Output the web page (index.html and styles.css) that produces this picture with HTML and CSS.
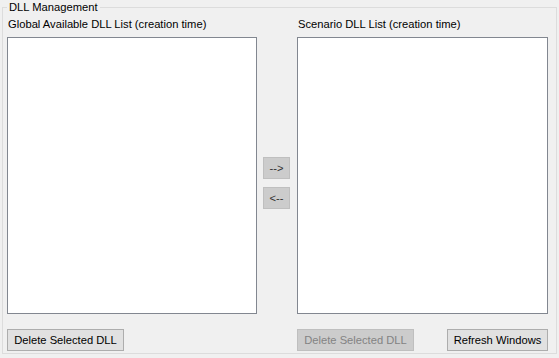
FILE: index.html
```html
<!DOCTYPE html>
<html lang="en">
<head>
    <meta charset="UTF-8">
    <title>DLL Management</title>
    <link rel="stylesheet" href="styles.css">
</head>
<body>

<fieldset class="group">
    <legend>DLL Management</legend>
    <div class="columns">
        <div class="col col-left">
            <div class="caption">Global Available DLL List (creation time)</div>
            <div class="listbox"></div>
            <div class="btn-row">
                <button class="btn">Delete Selected DLL</button>
            </div>
        </div>
        <div class="col col-mid">
            <button class="btn btn-arrow">--&gt;</button>
            <button class="btn btn-arrow">&lt;--</button>
        </div>
        <div class="col col-right">
            <div class="caption">Scenario DLL List (creation time)</div>
            <div class="listbox"></div>
            <div class="btn-row">
                <button class="btn" disabled>Delete Selected DLL</button>
                <button class="btn btn-refresh">Refresh Windows</button>
            </div>
        </div>
    </div>
</fieldset>

</body>
</html>
```

FILE: styles.css
```css
*{
    margin: 0;
    padding: 0;
    box-sizing: border-box;
}
body{
    background: #f0f0f0;
    font-family: "Liberation Sans", Arial, sans-serif;
    font-size: 11.2px;
    color: #000;
    padding-top: 1px;
}
.group{
    margin-left: 2px;
    width: 555px;
    border: 1px solid #dcdcdc;
    padding: 4px 0 2px 4px;
}
.group legend{
    padding: 0 2px;
    line-height: 13px;
}
.columns{
    display: flex;
}
.col{
    display: flex;
    flex-direction: column;
}
.col-left{
    width: 250px;
}
.col-mid{
    width: 27px;
    margin-left: 6px;
    margin-right: 7px;
    padding-top: 139px;
}
.col-right{
    width: 251px;
}
.caption{
    line-height: 13px;
    height: 13px;
    margin-left: 1px;
}
.listbox{
    margin-top: 6px;
    height: 277px;
    background: #fff;
    border: 1px solid #828790;
}
.btn-row{
    display: flex;
    justify-content: space-between;
    margin-top: 15px;
}
.btn{
    font-family: "Liberation Sans", Arial, sans-serif;
    font-size: 11.2px;
    width: 117px;
    height: 22px;
    background: #e1e1e1;
    border: 1px solid #adadad;
    color: #000;
}
.btn:disabled{
    background: #cccccc;
    border-color: #bfbfbf;
    color: #838383;
}
.btn-refresh{
    width: 101px;
}
.btn-arrow{
    width: 27px;
    height: 22px;
    margin-bottom: 8px;
    background: #cccccc;
    border-color: #bfbfbf;
    color: #333;
}
```
